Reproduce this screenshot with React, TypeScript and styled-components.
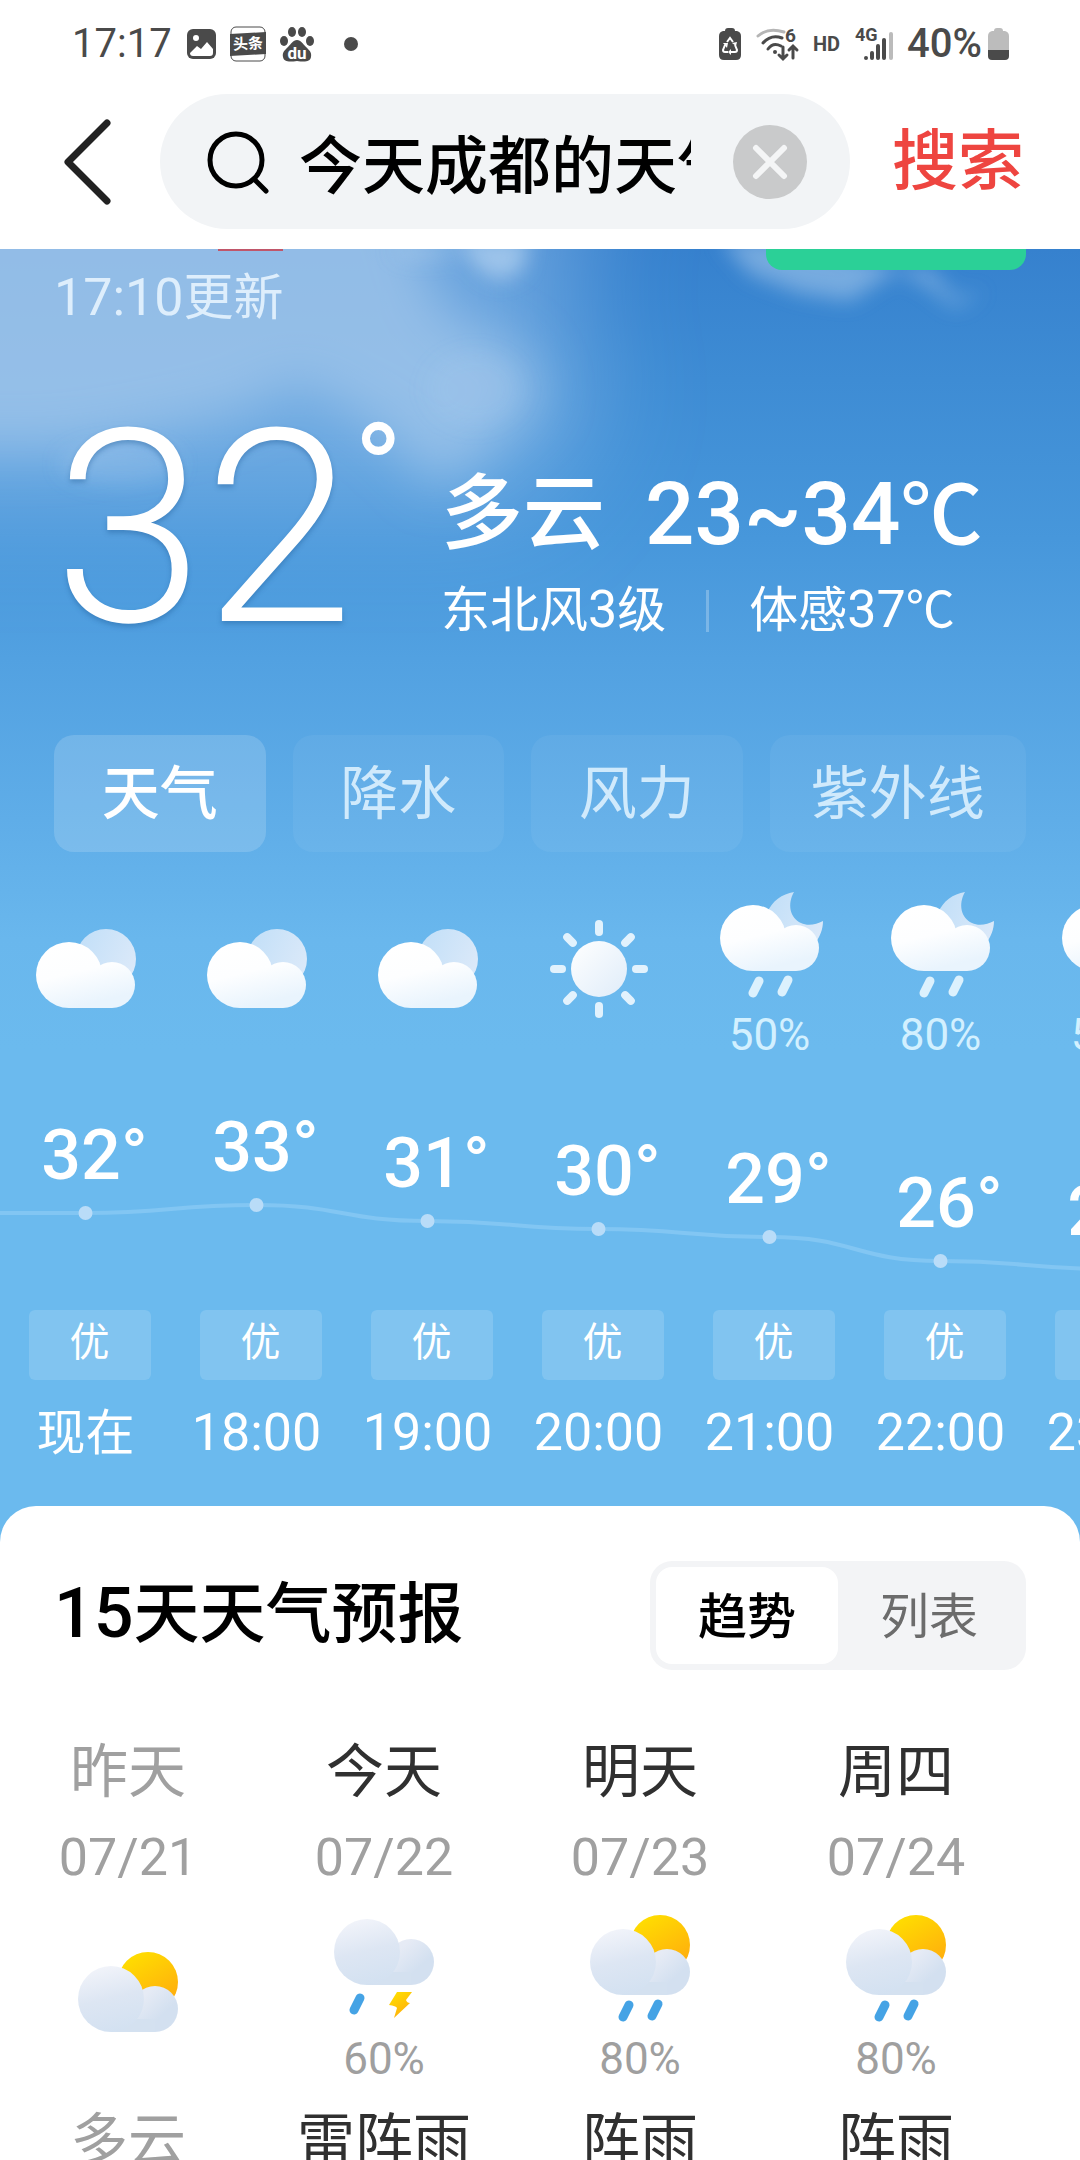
import React, { useId, useState } from 'react';
import styled, { createGlobalStyle } from 'styled-components';

const GlobalStyle = createGlobalStyle`
  * { box-sizing: border-box; }
  body { margin: 0; background: #fff; }
  body, button, input { font-family: Roboto, "Noto Sans CJK SC", sans-serif; }
  button { border: 0; padding: 0; background: none; cursor: pointer; }
  ul, h1, h2, p { margin: 0; padding: 0; list-style: none; font-weight: 400; }
  svg { display: block; flex: none; overflow: visible; }
`;

const Screen = styled.div`
  display: flex;
  flex-direction: column;
  height: 100vh;
  overflow: hidden;
`;

/* ---------- status bar ---------- */

const StatusBar = styled.div`
  flex: none;
  display: flex;
  align-items: center;
  justify-content: space-between;
  height: 88px;
  padding: 0 71px 0 72px;
  color: #4a4a4a;
  font-size: 40px;
  line-height: 88px;
`;

const StatusGroup = styled.div<{ $gap: number }>`
  display: flex;
  align-items: center;
  gap: ${(p) => p.$gap}px;
`;

const StatusText = styled.span<{ $bold?: boolean }>`
  font-weight: ${(p) => (p.$bold ? 500 : 400)};
`;

/* ---------- search header ---------- */

const Header = styled.header`
  flex: none;
  display: flex;
  align-items: center;
  padding: 6px 56px 20px 0;
`;

const BackButton = styled.button`
  width: 160px;
  padding-left: 62px;
`;

const SearchBox = styled.label`
  flex: 1;
  min-width: 0;
  display: flex;
  align-items: center;
  height: 135px;
  padding: 0 43px 0 46px;
  border-radius: 68px;
  background: #f2f4f6;
`;

const SearchInput = styled.input`
  flex: 1;
  min-width: 0;
  margin: 0 42px 0 29px;
  padding: 10px 0 0;
  border: 0;
  outline: 0;
  background: transparent;
  color: #000;
  font-size: 63px;
  font-weight: 500;
  line-height: 90px;
`;

const SearchButton = styled.button`
  margin-left: 42px;
  color: #ee4540;
  font-size: 66px;
  font-weight: 500;
  line-height: 90px;
`;

/* ---------- current weather ---------- */

const Content = styled.main`
  flex: 1;
  min-height: 0;
  display: flex;
  flex-direction: column;
  overflow: hidden;
  background: #6bbaee;
`;

const Hero = styled.section`
  flex: none;
  position: relative;
  isolation: isolate;
  padding-bottom: 42px;
  background: linear-gradient(
    #3681ce 0,
    #3e8cd4 130px,
    #4797db 290px,
    #52a1e1 410px,
    #5fade8 570px,
    #69b7ed 690px,
    #6bbaee 800px
  );
  color: #fff;
`;

const Sky = styled.svg`
  position: absolute;
  inset: 0 auto auto 0;
  width: 100%;
  height: 420px;
  z-index: -1;
  overflow: hidden;
`;

const PeekRow = styled.div`
  display: flex;
  justify-content: space-between;
  height: 21px;
  padding: 0 54px 0 218px;
`;

const RedEdge = styled.div`
  width: 65px;
  height: 2px;
  background: #c0566a;
`;

const GreenEdge = styled.div`
  width: 260px;
  border-radius: 0 0 16px 16px;
  background: #2bd097;
`;

const Digits = styled.span<{ $size: number }>`
  font-size: ${(p) => p.$size}px;
`;

const Updated = styled.p`
  padding-left: 54px;
  font-size: 50px;
  line-height: 56px;
  color: rgba(235, 247, 255, 0.85);
`;

const Now = styled.div`
  display: flex;
  align-items: flex-end;
  margin-top: 79px;
  padding-left: 54px;
`;

const BigTemp = styled.div`
  display: flex;
  align-items: flex-start;
  width: 387px;
  font-size: 270px;
  font-weight: 340;
  line-height: 248px;
  text-shadow: 0 3px 5px rgba(30, 90, 150, 0.4);
`;

const BigDegree = styled.span`
  font-size: 132px;
  font-weight: 400;
  line-height: 134px;
  text-shadow: none;
`;

const Details = styled.div`
  display: grid;
  gap: 14px;
  padding-bottom: 12px;
`;

const Condition = styled.div`
  display: flex;
  gap: 40px;
  font-size: 82px;
  font-weight: 500;
  line-height: 100px;
  white-space: nowrap;
`;

const Feels = styled.div`
  display: flex;
  align-items: center;
  gap: 40px;
  font-size: 49px;
  line-height: 60px;
  white-space: nowrap;
`;

const Divider = styled.span`
  width: 3px;
  height: 42px;
  background: rgba(255, 255, 255, 0.25);
`;

const Tabs = styled.div`
  display: flex;
  gap: 27px;
  margin-top: 82px;
  padding: 0 54px;
`;

const Tab = styled.button<{ $active: boolean; $wide: boolean }>`
  flex: ${(p) => (p.$wide ? 257 : 212)} 1 0;
  height: 117px;
  padding-bottom: 10px;
  border-radius: 20px;
  background: rgba(255, 255, 255, ${(p) => (p.$active ? 0.16 : 0.05)});
  color: ${(p) => (p.$active ? '#fff' : 'rgba(228, 245, 255, 0.85)')};
  font-size: 58px;
  font-weight: ${(p) => (p.$active ? 500 : 400)};
`;

/* ---------- hourly ---------- */

const HourList = styled.ul`
  position: relative;
  display: flex;
  margin-top: 36px;
  overflow: hidden;
`;

const Hour = styled.li`
  flex: 0 0 171px;
  display: flex;
  flex-direction: column;
  align-items: center;
`;

const WeatherSlot = styled.div`
  display: flex;
  flex-direction: column;
  align-items: center;
  justify-content: center;
  height: 174px;
`;

const Chance = styled.span<{ $light?: boolean }>`
  font-size: 44px;
  line-height: 44px;
  color: ${(p) => (p.$light ? '#d2f0ff' : '#9f9f9f')};
`;

const TempSlot = styled.div`
  height: 248px;
  padding-left: 18px;
  font-size: 70px;
  font-weight: 500;
  line-height: 80px;
`;

const Curve = styled.svg`
  position: absolute;
  top: 174px;
  left: 0;
  pointer-events: none;
`;

const AirChip = styled.div`
  width: 122px;
  height: 70px;
  margin-left: 8px;
  border-radius: 6px;
  background: rgba(255, 255, 255, 0.15);
  font-size: 40px;
  line-height: 66px;
  text-align: center;
`;

const HourTime = styled.div`
  margin-top: 23px;
  font-size: 52px;
  line-height: 60px;
`;

const NowLabel = styled.span`
  font-size: 49px;
`;

/* ---------- 15-day sheet ---------- */

const Sheet = styled.section`
  flex: 1 0 auto;
  padding-top: 55px;
  border-radius: 36px 36px 0 0;
  background: #fff;
`;

const SheetHead = styled.div`
  display: flex;
  align-items: center;
  justify-content: space-between;
  padding: 0 54px;
`;

const SheetTitle = styled.h2`
  padding-bottom: 4px;
  color: #000;
  font-size: 66px;
  font-weight: 500;
  line-height: 90px;
`;

const Toggle = styled.div`
  display: flex;
  height: 109px;
  padding: 6px;
  border-radius: 22px;
  background: #f3f4f6;
`;

const ToggleButton = styled.button<{ $active: boolean }>`
  width: 182px;
  padding-bottom: 6px;
  border-radius: 16px;
  background: ${(p) => (p.$active ? '#fff' : 'transparent')};
  color: ${(p) => (p.$active ? '#000' : '#6c6c6c')};
  font-size: 49px;
  font-weight: ${(p) => (p.$active ? 500 : 400)};
`;

const DayList = styled.ul`
  display: flex;
  margin-top: 67px;
  overflow: hidden;
`;

const Day = styled.li<{ $past: boolean }>`
  flex: 0 0 256px;
  display: flex;
  flex-direction: column;
  align-items: center;
  color: ${(p) => (p.$past ? '#a0a0a0' : '#303030')};
  font-size: 58px;
  line-height: 70px;
`;

const DayDate = styled.span`
  margin: 21px 0 24px;
  color: #a0a0a0;
  font-size: 52px;
  line-height: 60px;
`;

const DayLabel = styled.span`
  margin-top: 20px;
`;

/* ---------- weather icons ---------- */

type Kind = 'cloudy' | 'sunny' | 'nightRain' | 'dayCloudy' | 'dayRain' | 'storm';

function WeatherIcon({ kind }: { kind: Kind }) {
  const id = useId().replace(/[^a-zA-Z0-9]/g, '');
  const url = (name: string) => `url(#${name}${id})`;
  const colored = kind === 'dayCloudy' || kind === 'dayRain' || kind === 'storm';
  const shift = kind === 'storm' ? -25 : kind === 'nightRain' || kind === 'dayRain' ? -15 : 0;
  const drop = colored ? '#45a3e5' : '#dcf1fd';

  if (kind === 'sunny') {
    return (
      <svg width="120" height="120" viewBox="0 0 120 120" aria-label="晴">
        <defs>
          <linearGradient id={`s${id}`} x1="0" y1="0" x2="1" y2="1">
            <stop offset="0" stopColor="#fff" />
            <stop offset="1" stopColor="#dfecf9" />
          </linearGradient>
        </defs>
        <circle cx="60" cy="54" r="28" fill={url('s')} />
        {[0, 45, 90, 135, 180, 225, 270, 315].map((a) => (
          <rect key={a} x="56" y="5" width="8" height="16" rx="4" fill="#e2f2fd" transform={`rotate(${a} 60 54)`} />
        ))}
      </svg>
    );
  }

  return (
    <svg width="120" height="120" viewBox="0 0 120 120" aria-hidden="true">
      <defs>
        <linearGradient id={`b${id}`} gradientUnits="userSpaceOnUse" x1="30" y1="27" x2="46" y2="93">
          <stop offset="0" stopColor={colored ? '#f2f4fa' : '#fff'} />
          <stop offset="0.5" stopColor={colored ? '#dde6f3' : '#fdfeff'} />
          <stop offset="1" stopColor={colored ? '#d3e1f1' : '#e9f4fd'} />
        </linearGradient>
        <linearGradient id={`f${id}`} gradientUnits="userSpaceOnUse" x1="72" y1="60" x2="90" y2="80">
          <stop offset="0" stopColor="#e6ebf5" />
          <stop offset="1" stopColor="#d3e0f0" />
        </linearGradient>
        <linearGradient id={`y${id}`} x1="0.2" y1="0" x2="0.8" y2="1">
          <stop offset="0" stopColor="#ffe000" />
          <stop offset="1" stopColor="#ffa80f" />
        </linearGradient>
        <linearGradient id={`w${id}`} x1="0.1" y1="0.2" x2="1" y2="0.6">
          <stop offset="0" stopColor="#c4e0f8" />
          <stop offset="1" stopColor="#dbe9f9" />
        </linearGradient>
      </defs>
      {kind === 'nightRain' && (
        <path
          d="M84 -1C72 1 62 8 57 20L75 60L105 50C110 44 113 36 113 28C106 32 97 33 91 30C80 25 77 11 84 -1Z"
          fill={url('w')}
        />
      )}
      <g transform={`translate(0 ${shift})`}>
        {kind === 'cloudy' && <circle cx="80" cy="44" r="30" fill={url('w')} />}
        {(kind === 'dayCloudy' || kind === 'dayRain') && <circle cx="80" cy="43" r="30" fill={url('y')} />}
        {colored ? (
          <>
            <path d="M43 72H87V93H43Z" fill={url('b')} />
            <circle cx="87" cy="70" r="23" fill={url('f')} />
            <path d="M43 80H87V93H43Z" fill="#d4e1f0" />
            <circle cx="43" cy="60" r="33" fill={url('b')} />
          </>
        ) : (
          <>
            <circle cx="86" cy="70" r="23" fill={url('b')} />
            <path d="M43 60H86V93H43Z" fill={url('b')} />
            <circle cx="43" cy="60" r="33" fill={url('b')} />
          </>
        )}
      </g>
      {(kind === 'nightRain' || kind === 'dayRain') && (
        <g stroke={drop} strokeWidth="9" strokeLinecap="round">
          <path d="M49 88L43 100" />
          <path d="M78 87L72 99" />
        </g>
      )}
      {kind === 'storm' && (
        <>
          <path d="M36 81L30 93" stroke={drop} strokeWidth="9" strokeLinecap="round" />
          <path d="M73 75H88L82 83Q83 86 86 86L70 101L73 91Q72 89 65 88Z" fill={url('y')} />
        </>
      )}
    </svg>
  );
}

/* ---------- data ---------- */

const tabs = ['天气', '降水', '风力', '紫外线'];

const hours: { time: string; temp: number; kind: Kind; chance?: string }[] = [
  { time: '现在', temp: 32, kind: 'cloudy' },
  { time: '18:00', temp: 33, kind: 'cloudy' },
  { time: '19:00', temp: 31, kind: 'cloudy' },
  { time: '20:00', temp: 30, kind: 'sunny' },
  { time: '21:00', temp: 29, kind: 'nightRain', chance: '50%' },
  { time: '22:00', temp: 26, kind: 'nightRain', chance: '80%' },
  { time: '23:00', temp: 25, kind: 'nightRain', chance: '50%' },
];

const days: { name: string; date: string; kind: Kind; chance?: string; label: string }[] = [
  { name: '昨天', date: '07/21', kind: 'dayCloudy', label: '多云' },
  { name: '今天', date: '07/22', kind: 'storm', chance: '60%', label: '雷阵雨' },
  { name: '明天', date: '07/23', kind: 'dayRain', chance: '80%', label: '阵雨' },
  { name: '周四', date: '07/24', kind: 'dayRain', chance: '80%', label: '阵雨' },
];

const HOUR_WIDTH = 171;
const pointY = (temp: number) => 143 + (33 - temp) * 8;
const points = hours.map((h, i) => ({ x: HOUR_WIDTH * (i + 0.5), y: pointY(h.temp) }));
const curvePath = points.reduce((d, p, i) => {
  if (i === 0) return `M0 ${p.y}H${p.x}`;
  const prev = points[i - 1];
  const mid = (prev.x + p.x) / 2;
  return `${d}C${mid} ${prev.y} ${mid} ${p.y} ${p.x} ${p.y}`;
}, '');

/* ---------- parts ---------- */

function LeftStatus() {
  return (
    <StatusGroup $gap={14}>
      <StatusText>17:17</StatusText>
      <svg width="30" height="30" viewBox="0 0 30 30" aria-hidden="true">
        <rect x="1" width="29" height="30" rx="6" fill="#4a4a4a" />
        <circle cx="10" cy="9" r="3" fill="#fff" />
        <path d="M4 24L11 17L15 20L21 13L27 20V24Q27 27 24 27H7Q4 27 4 24Z" fill="#fff" />
      </svg>
      <svg width="36" height="36" viewBox="0 0 36 36" aria-hidden="true">
        <rect x="1" y="1" width="34" height="34" rx="5" fill="#fff" stroke="#4a4a4a" />
        <path d="M0 8L36 6V28L0 30Z" fill="#4a4a4a" />
        <text x="18" y="23" fontSize="15" fontWeight="700" fill="#fff" textAnchor="middle" transform="rotate(-3 18 18)">
          头条
        </text>
      </svg>
      <svg width="34" height="35" viewBox="0 0 34 35" fill="#4a4a4a" aria-hidden="true">
        <ellipse cx="4" cy="14" rx="4" ry="5" />
        <ellipse cx="12" cy="5" rx="4" ry="5" />
        <ellipse cx="22" cy="5" rx="4" ry="5" />
        <ellipse cx="30" cy="14" rx="4" ry="5" />
        <path d="M17 13C21 13 23 17 26 20C29 23 32 25 31 30C30 35 25 35 17 34C9 35 4 35 3 30C2 25 5 23 8 20C11 17 13 13 17 13Z" />
        <text x="17" y="32" fontSize="17" fontWeight="700" fill="#fff" textAnchor="middle">
          du
        </text>
      </svg>
      <svg width="44" height="14" viewBox="0 0 44 14" aria-hidden="true">
        <circle cx="23" cy="7" r="7" fill="#4a4a4a" />
      </svg>
    </StatusGroup>
  );
}

function RightStatus() {
  return (
    <StatusGroup $gap={14}>
      <svg width="22" height="32" viewBox="0 0 22 32" aria-hidden="true">
        <path d="M6 3Q6 0 9 0H13Q16 0 16 3H18Q22 4 22 8V27Q22 32 17 32H5Q0 32 0 27V8Q0 4 4 3Z" fill="#4a4a4a" />
        <g fill="none" stroke="#fff" strokeWidth="2">
          <path d="M8 14L11 10L14 14" />
          <path d="M6 17L4 22Q4 24 6 24H9" />
          <path d="M16 17L18 22Q18 24 16 24H12" />
        </g>
        <path d="M12 21V27L9 24ZM4 15H9L8 20ZM13 15L18 14L17 18Z" fill="#fff" />
      </svg>
      <svg width="44" height="34" viewBox="0 0 44 34" fill="none" strokeWidth="3" strokeLinecap="round" aria-hidden="true">
        <path d="M3 9Q13 0 29 5" stroke="#b5b5b5" />
        <path d="M8 16Q16 7 27 11" stroke="#4a4a4a" />
        <path d="M13 22Q18 15 26 19" stroke="#4a4a4a" />
        <circle cx="20" cy="25" r="2" fill="#4a4a4a" />
        <path d="M28 20V31M24 28L28 32L32 28" stroke="#4a4a4a" />
        <path d="M38 31V20M34 23L38 19L42 23" stroke="#4a4a4a" />
        <text x="30" y="15" fontSize="19" fontWeight="700" fill="#4a4a4a">
          6
        </text>
      </svg>
      <svg width="28" height="16" viewBox="0 0 28 16" aria-hidden="true">
        <text x="0" y="15" fontSize="20" fontWeight="700" fill="#4a4a4a">
          HD
        </text>
      </svg>
      <svg width="38" height="34" viewBox="0 0 38 34" fill="#4a4a4a" aria-hidden="true">
        <text x="0" y="14" fontSize="18" fontWeight="700">
          4G
        </text>
        <circle cx="11" cy="31" r="2" />
        <rect x="15" y="24" width="4" height="9" rx="2" />
        <rect x="21" y="17" width="4" height="16" rx="2" />
        <rect x="27" y="11" width="4" height="22" rx="2" />
        <rect x="34" y="5" width="4" height="28" rx="2" fill="#bbb" />
      </svg>
      <StatusGroup $gap={6}>
        <StatusText $bold>40%</StatusText>
        <svg width="21" height="32" viewBox="0 0 21 32" aria-hidden="true">
          <path d="M6 3Q6 0 9 0H12Q15 0 15 3H17Q21 4 21 8V22H0V8Q0 4 4 3Z" fill="#bcbcbc" />
          <path d="M0 22H21V28Q21 32 17 32H4Q0 32 0 28Z" fill="#4a4a4a" />
        </svg>
      </StatusGroup>
    </StatusGroup>
  );
}

function Clouds() {
  return (
    <Sky viewBox="0 0 1080 420" preserveAspectRatio="xMinYMin slice" aria-hidden="true">
      <defs>
        <filter id="haze" x="-50%" y="-50%" width="200%" height="200%">
          <feGaussianBlur stdDeviation="55" />
        </filter>
        <filter id="soft" x="-50%" y="-50%" width="200%" height="200%">
          <feGaussianBlur stdDeviation="26" />
        </filter>
        <filter id="wisp" x="-50%" y="-50%" width="200%" height="200%">
          <feGaussianBlur stdDeviation="10" />
        </filter>
      </defs>
      <g fill="#a9cdf0" filter="url(#haze)">
        <path d="M-200 -200H620L560 60L600 150L520 260H-200Z" opacity="0.45" />
      </g>
      <g fill="#b0cfed" filter="url(#soft)">
        <path d="M-80 -80H400L440 60L520 100L545 150L490 200L440 240L380 180L300 135L240 165L150 185L60 200H-80Z" opacity="0.58" />
      </g>
      <g filter="url(#wisp)" fill="#c3dcf3">
        <ellipse cx="475" cy="140" rx="48" ry="38" opacity="0.1" />
        <path d="M455 -10H530L522 22L500 32L480 22Z" opacity="0.6" />
        <ellipse cx="425" cy="2" rx="32" ry="8" opacity="0.35" />
        <ellipse cx="120" cy="215" rx="60" ry="22" opacity="0.2" />
        <path d="M720 -10H800L900 20L880 32L850 52L800 44L750 25Z" opacity="0.45" />
        <path d="M890 18L930 20L955 50L985 42L955 58L925 35Z" opacity="0.45" />
      </g>
    </Sky>
  );
}

export default function App() {
  const [query, setQuery] = useState('今天成都的天气');
  const [tab, setTab] = useState(0);
  const [view, setView] = useState(0);

  return (
    <Screen>
      <GlobalStyle />
      <StatusBar>
        <LeftStatus />
        <RightStatus />
      </StatusBar>

      <Header>
        <BackButton aria-label="返回">
          <svg width="48" height="88" viewBox="0 0 48 88" fill="none" stroke="#222" strokeWidth="7" strokeLinecap="round" strokeLinejoin="round">
            <path d="M45 5L6 44L45 83" />
          </svg>
        </BackButton>
        <SearchBox>
          <svg width="64" height="64" viewBox="0 0 64 64" fill="none" stroke="#000" strokeWidth="5" strokeLinecap="round" aria-hidden="true">
            <circle cx="30" cy="30" r="26" />
            <path d="M48 49L60 61" />
          </svg>
          <SearchInput aria-label="搜索内容" value={query} onChange={(e) => setQuery(e.target.value)} />
          <button type="button" aria-label="清除" onClick={() => setQuery('')}>
            <svg width="74" height="74" viewBox="0 0 74 74">
              <circle cx="37" cy="37" r="37" fill="#c9cacb" />
              <path d="M23 23L51 51M51 23L23 51" stroke="#f4f5f6" strokeWidth="6" strokeLinecap="round" />
            </svg>
          </button>
        </SearchBox>
        <SearchButton>搜索</SearchButton>
      </Header>

      <Content>
        <Hero>
          <Clouds />
          <PeekRow aria-hidden="true">
            <RedEdge />
            <GreenEdge />
          </PeekRow>
          <Updated>
            <Digits $size={52}>17:10</Digits>更新
          </Updated>

          <Now>
            <BigTemp>
              32<BigDegree>°</BigDegree>
            </BigTemp>
            <Details>
              <Condition>
                <span>多云</span>
                <span>
                  <Digits $size={87}>23~34</Digits>℃
                </span>
              </Condition>
              <Feels>
                <span>
                  东北风<Digits $size={52}>3</Digits>级
                </span>
                <Divider />
                <span>
                  体感<Digits $size={52}>37</Digits>℃
                </span>
              </Feels>
            </Details>
          </Now>

          <Tabs>
            {tabs.map((name, i) => (
              <Tab key={name} $active={tab === i} $wide={name.length > 2} aria-pressed={tab === i} onClick={() => setTab(i)}>
                {name}
              </Tab>
            ))}
          </Tabs>

          <HourList>
            <Curve width={HOUR_WIDTH * hours.length} height="248" aria-hidden="true">
              <path d={curvePath} fill="none" stroke="#82c6f3" strokeWidth="4" />
              {points.map((p) => (
                <circle key={p.x} cx={p.x} cy={p.y} r="7" fill="#b9dcf8" />
              ))}
            </Curve>
            {hours.map((h) => (
              <Hour key={h.time}>
                <WeatherSlot>
                  <WeatherIcon kind={h.kind} />
                  {h.chance && <Chance $light>{h.chance}</Chance>}
                </WeatherSlot>
                <TempSlot style={{ paddingTop: pointY(h.temp) - 98 }}>{h.temp}°</TempSlot>
                <AirChip>优</AirChip>
                <HourTime>{h.time.includes(':') ? h.time : <NowLabel>{h.time}</NowLabel>}</HourTime>
              </Hour>
            ))}
          </HourList>
        </Hero>

        <Sheet>
          <SheetHead>
            <SheetTitle>
              <Digits $size={70}>15</Digits>天天气预报
            </SheetTitle>
            <Toggle>
              {['趋势', '列表'].map((name, i) => (
                <ToggleButton key={name} $active={view === i} aria-pressed={view === i} onClick={() => setView(i)}>
                  {name}
                </ToggleButton>
              ))}
            </Toggle>
          </SheetHead>
          <DayList>
            {days.map((d, i) => (
              <Day key={d.name} $past={i === 0}>
                <span>{d.name}</span>
                <DayDate>{d.date}</DayDate>
                <WeatherSlot>
                  <WeatherIcon kind={d.kind} />
                  {d.chance && <Chance>{d.chance}</Chance>}
                </WeatherSlot>
                <DayLabel>{d.label}</DayLabel>
              </Day>
            ))}
          </DayList>
        </Sheet>
      </Content>
    </Screen>
  );
}
